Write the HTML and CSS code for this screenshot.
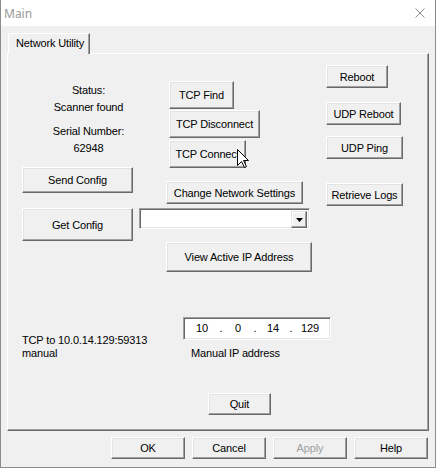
FILE: index.html
```html
<!DOCTYPE html>
<html>
<head>
<meta charset="utf-8">
<title>Main</title>
<link rel="stylesheet" href="styles.css">
</head>
<body>
<div class="window">
  <div class="titlebar">
    <span class="title">Main</span>
    <svg class="close" width="10" height="10" viewBox="0 0 10 10"><path d="M0.5 0.5 L9.5 9.5 M9.5 0.5 L0.5 9.5" stroke="#8a8a8a" stroke-width="1" fill="none"/></svg>
  </div>
  <div class="client">
    <div class="tabs"><div class="tab">Network Utility</div></div>
    <div class="panel">
      <div class="top">
        <div class="col-left">
          <div class="status">
            <div class="line">Status:</div>
            <div class="line val">Scanner found</div>
            <div class="line lbl2">Serial Number:</div>
            <div class="line val">62948</div>
          </div>
          <button class="btn send">Send Config</button>
          <button class="btn get">Get Config</button>
        </div>
        <div class="col-mid">
          <button class="btn tcp-find">TCP Find</button>
          <button class="btn tcp-disc">TCP Disconnect</button>
          <button class="btn tcp-conn">TCP Connect</button>
          <button class="btn change">Change Network Settings</button>
          <div class="combo"><div class="combo-btn"><svg width="7" height="4" viewBox="0 0 7 4"><path d="M0 0 H7 L3.5 4 Z" fill="#000"/></svg></div></div>
          <button class="btn view-ip">View Active IP Address</button>
        </div>
        <div class="col-right">
          <button class="btn reboot">Reboot</button>
          <button class="btn udp-reboot">UDP Reboot</button>
          <button class="btn udp-ping">UDP Ping</button>
          <button class="btn retrieve">Retrieve Logs</button>
        </div>
      </div>
      <div class="lower">
        <div class="conn-info">
          <div>TCP to 10.0.14.129:59313</div>
          <div>manual</div>
        </div>
        <div class="ip-block">
          <div class="ip-field">
            <span>10</span><span>.</span><span>0</span><span>.</span><span>14</span><span>.</span><span>129</span>
          </div>
          <div class="ip-label">Manual IP address</div>
        </div>
      </div>
      <button class="btn quit">Quit</button>
    </div>
    <div class="dlg-buttons">
      <button class="btn dlg">OK</button>
      <button class="btn dlg">Cancel</button>
      <button class="btn dlg disabled">Apply</button>
      <button class="btn dlg">Help</button>
    </div>
  </div>
  <svg class="cursor" width="12" height="19" viewBox="0 0 12 19"><path d="M0.5 0.5 L0.5 16.5 L4.5 12.5 L7.5 18.5 L9.5 17.5 L6.5 11.5 L11.5 11.5 Z" fill="#fff" stroke="#000" stroke-width="1" stroke-linejoin="miter"/></svg>
</div>
</body>
</html>
```

FILE: styles.css
```css
* { box-sizing: border-box; }
html, body { margin: 0; padding: 0; }
body {
  width: 436px;
  height: 468px;
  overflow: hidden;
  background: #fff;
  font-family: "Liberation Sans", Arial, sans-serif;
  font-size: 11px;
  letter-spacing: -0.15px;
  color: #000;
}
.window {
  position: relative;
  width: 436px;
  height: 468px;
  border: 1px solid #8c8c8c;
  border-top: none;
  background: #f0f0f0;
  display: flex;
  flex-direction: column;
}
.titlebar {
  height: 26px;
  flex: none;
  background: #fff;
  display: flex;
  align-items: center;
  justify-content: space-between;
  padding: 0 10px 0 3px;
}
.title {
  font-family: "Noto Sans", "Open Sans", sans-serif;
  font-size: 12px;
  letter-spacing: 0;
  color: #999;
}
.close { display: block; }
.client {
  flex: 1;
  display: flex;
  flex-direction: column;
  padding: 0 6px;
}
.tabs {
  display: flex;
  margin: 7px 0 0 1px;
}
.tab {
  position: relative;
  z-index: 1;
  height: 21px;
  width: 82px;
  padding-left: 7px;
  line-height: 19px;
  border-style: solid;
  border-width: 1px 1px 0 1px;
  border-color: #fff #696969 transparent #fff;
  box-shadow: inset -1px 0 #a0a0a0;
  background: #f0f0f0;
  margin-bottom: -1px;
  white-space: nowrap;
}
.panel {
  height: 378px;
  flex: none;
  border: 1px solid;
  border-color: #fff #696969 #696969 #fff;
  box-shadow: inset -1px -1px #a0a0a0;
  padding-left: 14px;
  display: flex;
  flex-direction: column;
  align-items: flex-start;
}
.btn {
  display: block;
  flex: none;
  margin: 0;
  padding: 0;
  font-family: "Liberation Sans", Arial, sans-serif;
  font-size: 11px;
  letter-spacing: -0.15px;
  color: #000;
  background: #f0f0f0;
  border: 1px solid;
  border-color: #fff #696969 #696969 #fff;
  box-shadow: inset -1px -1px #a0a0a0, inset 1px 1px #e3e3e3;
  text-align: center;
  white-space: nowrap;
}
.top {
  display: flex;
  align-items: flex-start;
}
.col-left {
  width: 111px;
  margin-top: 30px;
  display: flex;
  flex-direction: column;
}
.status {
  padding-left: 22px;
  text-align: center;
  line-height: 13px;
  white-space: nowrap;
}
.val { margin-top: 4px; }
.lbl2 { margin-top: 11px; }
.send { margin-top: 12px; width: 111px; height: 26px; }
.get { margin-top: 15px; width: 111px; height: 33px; }

.col-mid {
  margin-left: 6px;
  width: 173px;
  margin-top: 27px;
  display: flex;
  flex-direction: column;
  align-items: flex-start;
}
.tcp-find { margin-left: 30px; width: 65px; height: 28px; }
.tcp-disc { margin-left: 30px; width: 91px; height: 28px; margin-top: 1px; }
.tcp-conn { margin-left: 30px; width: 77px; height: 28px; margin-top: 2px; }
.change { margin-left: 27px; width: 137px; height: 23px; margin-top: 13px; }
.combo {
  width: 171px;
  height: 21px;
  margin-top: 4px;
  display: flex;
  justify-content: flex-end;
  background: #fff;
  border: 1px solid;
  border-color: #a0a0a0 #fff #fff #a0a0a0;
  box-shadow: inset 1px 1px #696969, inset -1px -1px #e3e3e3;
  padding: 2px;
}
.combo-btn {
  width: 16px;
  height: 17px;
  display: flex;
  align-items: center;
  justify-content: center;
  background: #f0f0f0;
  border: 1px solid;
  border-color: #e3e3e3 #696969 #696969 #e3e3e3;
  box-shadow: inset -1px -1px #a0a0a0, inset 1px 1px #fff;
}
.combo-btn svg { display: block; margin-top: 1px; }
.view-ip { margin-left: 27px; width: 146px; height: 30px; margin-top: 13px; }

.col-right {
  margin-left: 14px;
  margin-top: 11px;
  display: flex;
  flex-direction: column;
  align-items: flex-start;
}
.reboot { width: 62px; height: 23px; }
.udp-reboot { width: 75px; height: 23px; margin-top: 14px; }
.udp-ping { width: 77px; height: 23px; margin-top: 11px; }
.retrieve { width: 77px; height: 23px; margin-top: 24px; }

.lower {
  display: flex;
  align-items: flex-start;
  margin-top: 45px;
}
.conn-info {
  width: 161px;
  margin-top: 17px;
  line-height: 13px;
  white-space: nowrap;
}
.ip-field {
  width: 148px;
  height: 23px;
  background: #fff;
  border: 1px solid;
  border-color: #a0a0a0 #fff #fff #a0a0a0;
  box-shadow: inset 1px 1px #696969, inset -1px -1px #e3e3e3;
  padding-left: 3px;
  display: grid;
  grid-template-columns: 30px 8px 26px 8px 28px 8px 30px;
  align-items: center;
  text-align: center;
  line-height: 13px;
}
.ip-label {
  margin-top: 7px;
  padding-left: 8px;
  line-height: 13px;
}
.quit { margin-top: 33px; margin-left: 186px; width: 63px; height: 22px; }

.dlg-buttons {
  display: flex;
  justify-content: flex-end;
  gap: 7px;
  margin-top: 6px;
  padding-right: 1px;
}
.dlg { width: 74px; height: 22px; }
.disabled { color: #a0a0a0; }

.cursor {
  position: absolute;
  left: 236px;
  top: 149px;
  display: block;
}
```
